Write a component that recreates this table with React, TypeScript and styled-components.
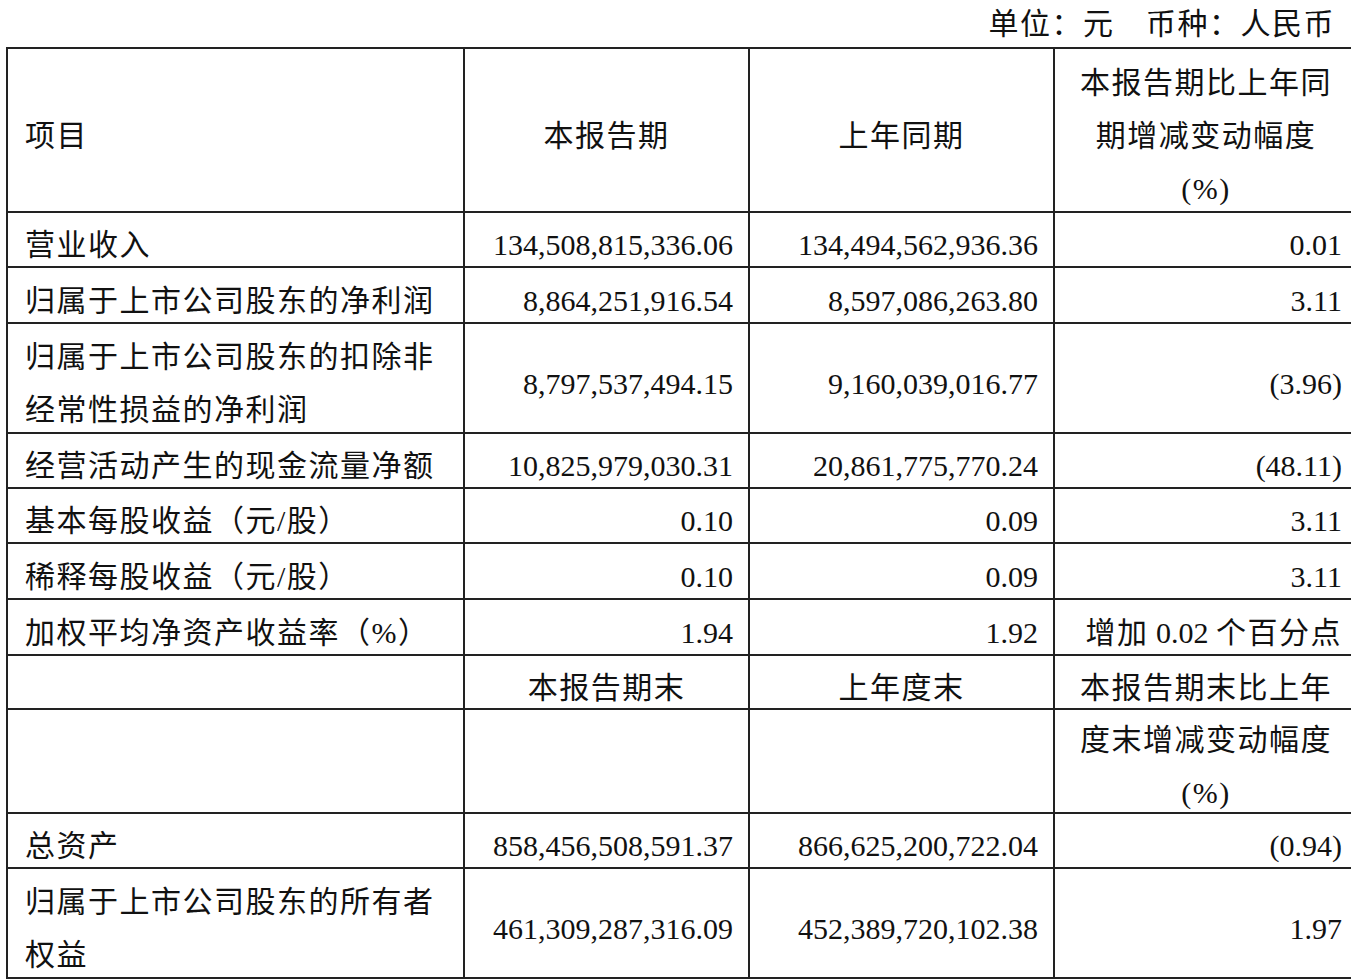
import React from "react";
import styled, { createGlobalStyle } from "styled-components";

const GlobalStyle = createGlobalStyle`
  html, body {
    margin: 0;
    padding: 0;
    background: #ffffff;
    overflow: hidden;
  }
  body {
    font-family: "Liberation Serif", "Noto Sans CJK SC", serif;
    color: #111111;
  }
`;

const Page = styled.div`
  width: 1351px;
  overflow: hidden;
`;

const Caption = styled.div`
  height: 47px;
  line-height: 47px;
  font-size: 30px;
  letter-spacing: 1.5px;
  text-align: right;
  padding-right: 16px;
  padding-top: 0;
  box-sizing: border-box;
  white-space: pre;
`;

const Grid = styled.div`
  display: grid;
  grid-template-columns: 455px 283px 303px 302px;
  grid-template-rows: 162px 53px 54px 108px 53px 53px 54px 54px 52px 102px 53px 108px;
  gap: 2px;
  padding: 2px;
  margin-left: 6px;
  width: max-content;
  background: #222222;
`;

type Align = "left" | "center" | "right";

const Cell = styled.div<{ $align: Align; $han?: boolean }>`
  background: #ffffff;
  display: flex;
  flex-direction: column;
  justify-content: center;
  align-items: ${(p) =>
    p.$align === "left" ? "flex-start" : p.$align === "right" ? "flex-end" : "center"};
  text-align: ${(p) => p.$align};
  box-sizing: border-box;
  padding: 10px ${(p) => (p.$align === "right" ? "15px" : "0")} 0
    ${(p) => (p.$align === "left" ? "17px" : "0")};
  font-size: 30px;
  line-height: 53px;
  white-space: nowrap;
  letter-spacing: ${(p) => (p.$han ? "1.5px" : "0")};
  overflow: visible;
`;

const Line = styled.span`
  display: block;
`;

const Han = styled.span`
  letter-spacing: 1.5px;
`;

type Row = {
  label: string[];
  a: string;
  b: string;
  c: React.ReactNode;
  cHan?: boolean;
};

const topRows: Row[] = [
  { label: ["营业收入"], a: "134,508,815,336.06", b: "134,494,562,936.36", c: "0.01" },
  { label: ["归属于上市公司股东的净利润"], a: "8,864,251,916.54", b: "8,597,086,263.80", c: "3.11" },
  {
    label: ["归属于上市公司股东的扣除非", "经常性损益的净利润"],
    a: "8,797,537,494.15",
    b: "9,160,039,016.77",
    c: "(3.96)",
  },
  { label: ["经营活动产生的现金流量净额"], a: "10,825,979,030.31", b: "20,861,775,770.24", c: "(48.11)" },
  { label: ["基本每股收益（元/股）"], a: "0.10", b: "0.09", c: "3.11" },
  { label: ["稀释每股收益（元/股）"], a: "0.10", b: "0.09", c: "3.11" },
  {
    label: ["加权平均净资产收益率（%）"],
    a: "1.94",
    b: "1.92",
    c: (
      <span>
        <Han>增加</Han> 0.02 <Han>个百分点</Han>
      </span>
    ),
  },
];

const bottomRows: Row[] = [
  { label: ["总资产"], a: "858,456,508,591.37", b: "866,625,200,722.04", c: "(0.94)" },
  {
    label: ["归属于上市公司股东的所有者", "权益"],
    a: "461,309,287,316.09",
    b: "452,389,720,102.38",
    c: "1.97",
  },
];

function DataRow({ row }: { row: Row }) {
  return (
    <>
      <Cell $align="left" $han>
        {row.label.map((l) => (
          <Line key={l}>{l}</Line>
        ))}
      </Cell>
      <Cell $align="right">{row.a}</Cell>
      <Cell $align="right">{row.b}</Cell>
      <Cell $align="right">{row.c}</Cell>
    </>
  );
}

export default function App() {
  return (
    <Page>
      <GlobalStyle />
      <Caption>单位：元　币种：人民币</Caption>
      <Grid>
        <Cell $align="left" $han>
          项目
        </Cell>
        <Cell $align="center" $han>
          本报告期
        </Cell>
        <Cell $align="center" $han>
          上年同期
        </Cell>
        <Cell $align="center" $han>
          <Line>本报告期比上年同</Line>
          <Line>期增减变动幅度</Line>
          <Line>(%)</Line>
        </Cell>

        {topRows.map((r, i) => (
          <DataRow key={"t" + i} row={r} />
        ))}

        <Cell $align="left" />
        <Cell $align="center" $han>
          本报告期末
        </Cell>
        <Cell $align="center" $han>
          上年度末
        </Cell>
        <Cell $align="center" $han>
          本报告期末比上年
        </Cell>

        <Cell $align="left" />
        <Cell $align="center" />
        <Cell $align="center" />
        <Cell $align="center" $han>
          <Line>度末增减变动幅度</Line>
          <Line>(%)</Line>
        </Cell>

        {bottomRows.map((r, i) => (
          <DataRow key={"b" + i} row={r} />
        ))}
      </Grid>
    </Page>
  );
}
